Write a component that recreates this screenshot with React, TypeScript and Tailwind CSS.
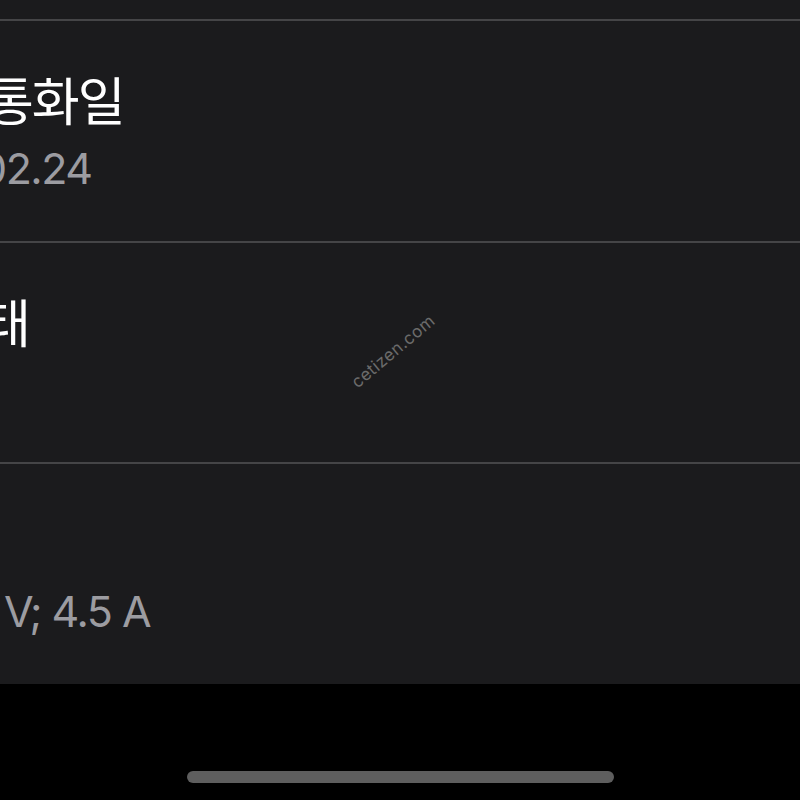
export default function App() {
  const rows = [
    { title: "통화일", value: "02.24", tx: "-ml-[14px]", vx: "-ml-[20px]" },
    { title: "태", value: "", tx: "-ml-[17px]", vx: "" },
    { title: "", value: "V; 4.5 A", tx: "", vx: "ml-[4px]" },
  ]

  return (
    <div className="relative w-[800px] h-[800px] overflow-hidden bg-black" style={{ fontFamily: "Inter, 'Noto Sans CJK KR', sans-serif" }}>
      <div className="h-[684px] bg-[#1b1b1d] flex flex-col">
        <div className="h-[19px]" />
        {rows.map((r, i) => (
          <div key={i} className="h-[222px] flex flex-col border-t-2 border-[#454547]">
            <div className={`pt-[48px] h-[121px] text-white text-[52px] leading-[60px] whitespace-nowrap tracking-[-2px] ${r.tx}`} style={{ fontFamily: "'Noto Sans CJK KR', sans-serif" }}>
              {r.title}
            </div>
            <div className={`text-[#9c9ca1] text-[43px] leading-[52px] whitespace-nowrap tracking-[-1.5px] ${r.vx}`}>
              {r.value}
            </div>
          </div>
        ))}
      </div>
      <div className="h-[116px] flex justify-center pt-[87px]">
        <div className="w-[427px] h-[12px] rounded-full bg-[#5e5e5e]" />
      </div>
      <div className="absolute left-[342px] top-[339px] -rotate-[40deg] text-[17px] text-[#6b6b6b] tracking-wide">
        cetizen.com
      </div>
    </div>
  )
}
